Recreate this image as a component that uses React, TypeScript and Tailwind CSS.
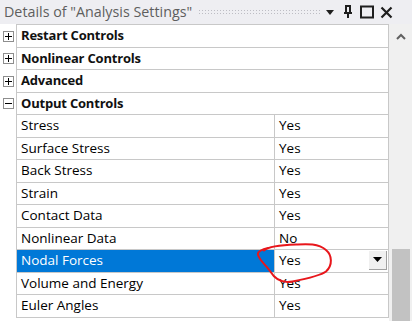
import React from "react";

type Row =
  | { kind: "cat"; label: string; open: boolean }
  | { kind: "item"; label: string; value: string; selected?: boolean };

const rows: Row[] = [
  { kind: "cat", label: "Restart Controls", open: false },
  { kind: "cat", label: "Nonlinear Controls", open: false },
  { kind: "cat", label: "Advanced", open: false },
  { kind: "cat", label: "Output Controls", open: true },
  { kind: "item", label: "Stress", value: "Yes" },
  { kind: "item", label: "Surface Stress", value: "Yes" },
  { kind: "item", label: "Back Stress", value: "Yes" },
  { kind: "item", label: "Strain", value: "Yes" },
  { kind: "item", label: "Contact Data", value: "Yes" },
  { kind: "item", label: "Nonlinear Data", value: "No" },
  { kind: "item", label: "Nodal Forces", value: "Yes", selected: true },
  { kind: "item", label: "Volume and Energy", value: "Yes" },
  { kind: "item", label: "Euler Angles", value: "Yes" },
];

function Expander({ open }: { open: boolean }) {
  return (
    <div className="w-[11px] h-[11px] border border-[#8e8e8e] bg-white flex items-center justify-center">
      <svg width="9" height="9" viewBox="0 0 9 9">
        <rect x="1" y="4" width="7" height="1" fill="#000" />
        {!open && <rect x="4" y="1" width="1" height="7" fill="#000" />}
      </svg>
    </div>
  );
}

export default function App() {
  return (
    <div
      className="relative w-[412px] h-[321px] overflow-hidden bg-white text-black"
      style={{ fontFamily: '"Open Sans", "Noto Sans", sans-serif' }}
    >
      {/* title bar */}
      <div className="h-[24px] bg-[#eeeef2] flex items-center pl-[4px]">
        <span className="text-[14.3px] text-[#5e5e5e] whitespace-nowrap leading-none">
          Details of "Analysis Settings"
        </span>
        <div className="ml-[6px] w-[122px] h-[6px] bg-[radial-gradient(circle,#bdbdc4_0.7px,transparent_0.8px)] bg-[length:3px_3px]" />
        <svg width="12" height="12" viewBox="0 0 12 12" className="ml-[4px]">
          <path d="M2 4 L10 4 L6 9 Z" fill="#1e1e1e" />
        </svg>
        <svg width="14" height="14" viewBox="0 0 14 14" className="ml-[5px]">
          <path d="M4 1 H10 M5 1 V8 M9 1 V8 M3 8 H11 M7 8 V13" stroke="#1e1e1e" strokeWidth="2" fill="none" />
        </svg>
        <svg width="14" height="14" viewBox="0 0 14 14" className="ml-[5px]">
          <rect x="1" y="1.5" width="12" height="11" stroke="#1e1e1e" strokeWidth="2" fill="none" />
        </svg>
        <svg width="13" height="13" viewBox="0 0 13 13" className="ml-[6px]">
          <path d="M1.5 1.5 L11.5 11.5 M11.5 1.5 L1.5 11.5" stroke="#1e1e1e" strokeWidth="2.2" />
        </svg>
      </div>

      <div className="flex h-[297px]">
        {/* grid */}
        <div className="w-[389px] flex flex-col">
          <div className="flex h-[1px]">
            <div className="w-[16px]" />
            <div className="flex-1 bg-[#c8c8c8]" />
          </div>
          {rows.map((r, i) => (
            <div key={i} className="flex h-[22.5px]">
              <div className="w-[16px] flex items-center justify-center">
                {r.kind === "cat" && <Expander open={r.open} />}
              </div>
              {r.kind === "cat" ? (
                <div className="flex-1 flex items-center border-l border-r border-b border-[#c8c8c8] pl-[4px]">
                  <span className="text-[13px] font-bold tracking-[-0.2px] leading-none whitespace-nowrap text-[#111]">{r.label}</span>
                </div>
              ) : (
                <div className="flex-1 flex border-l border-r border-b border-[#c8c8c8]">
                  <div
                    className={
                      "w-[258px] flex items-center pl-[4px] border-r border-[#c8c8c8] " +
                      (r.selected ? "bg-[#0078d7] text-white" : "")
                    }
                  >
                    <span className="text-[13.5px] leading-none whitespace-nowrap">{r.label}</span>
                  </div>
                  <div className="flex-1 flex items-center pl-[4px] pr-[1px]">
                    <span className="text-[13.5px] leading-none">{r.value}</span>
                    {r.selected && (
                      <div className="ml-auto w-[18px] h-[19px] bg-[#f0f0f0] border-r border-b border-[#a0a0a0] flex items-center justify-center">
                        <svg width="9" height="6" viewBox="0 0 9 6">
                          <path d="M0 0 H9 L4.5 5 Z" fill="#000" />
                        </svg>
                      </div>
                    )}
                  </div>
                </div>
              )}
            </div>
          ))}
        </div>
        {/* scrollbar */}
        <div className="flex-1 bg-[#f0f0f0] flex flex-col items-center">
          <svg width="10" height="8" viewBox="0 0 10 8" className="mt-[9px]">
            <path d="M1 6 L5 2 L9 6" stroke="#606060" strokeWidth="2" fill="none" />
          </svg>
          <div className="mt-auto w-[18px] h-[72px] bg-[#c2c2c2]" />
        </div>
      </div>

      {/* red annotation */}
      <svg className="absolute left-0 top-0 pointer-events-none" width="412" height="321">
        <path
          d="M264 250.5 C 268 247, 280 245, 296 244.5 C 306 244, 318 243, 326 250 C 332 255, 333 265, 326 271.5 C 320 276, 305 279, 292.5 281.5 C 285 283, 276 281, 270 271 C 266 265, 260 261, 258 255 C 257 252, 262 249, 268 248"
          stroke="#e8161b"
          strokeWidth="2"
          fill="none"
          strokeLinecap="round"
        />
      </svg>
    </div>
  );
}
